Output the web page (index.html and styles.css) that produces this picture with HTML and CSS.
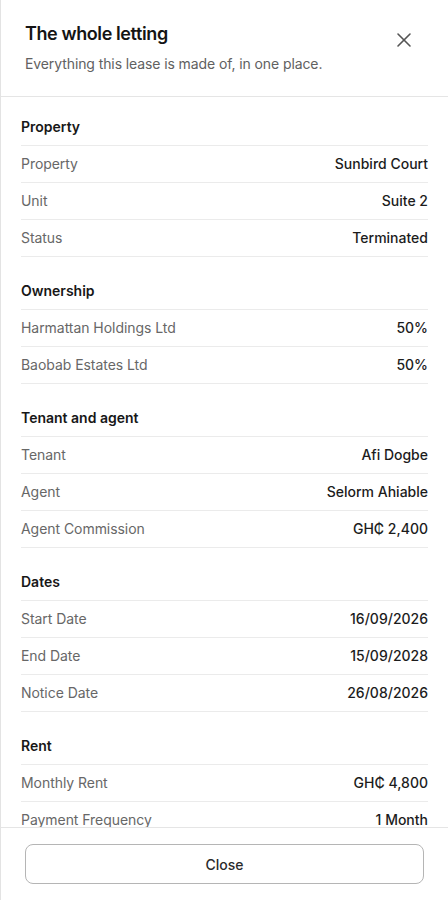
FILE: index.html
```html
<!DOCTYPE html>
<html lang="en">
<head>
<meta charset="utf-8">
<title>The whole letting</title>
<link rel="stylesheet" href="styles.css">
</head>
<body>
<div class="sheet">
  <header class="sheet-header">
    <div class="titles">
      <h1 class="title">The whole letting</h1>
      <p class="subtitle">Everything this lease is made of, in one place.</p>
    </div>
    <button class="close-x" aria-label="Close">
      <svg width="24" height="24" viewBox="0 0 24 24" fill="none" stroke="currentColor" stroke-width="1.6" stroke-linecap="round"><path d="M18 6 6 18"/><path d="m6 6 12 12"/></svg>
    </button>
  </header>
  <main class="sheet-body">
    <section class="group">
      <h2 class="group-title">Property</h2>
      <div class="row"><span class="label">Property</span><span class="value">Sunbird Court</span></div>
      <div class="row"><span class="label">Unit</span><span class="value">Suite 2</span></div>
      <div class="row"><span class="label">Status</span><span class="value">Terminated</span></div>
    </section>
    <section class="group">
      <h2 class="group-title">Ownership</h2>
      <div class="row"><span class="label">Harmattan Holdings Ltd</span><span class="value">50%</span></div>
      <div class="row"><span class="label">Baobab Estates Ltd</span><span class="value">50%</span></div>
    </section>
    <section class="group">
      <h2 class="group-title">Tenant and agent</h2>
      <div class="row"><span class="label">Tenant</span><span class="value">Afi Dogbe</span></div>
      <div class="row"><span class="label">Agent</span><span class="value">Selorm Ahiable</span></div>
      <div class="row"><span class="label">Agent Commission</span><span class="value">GH₵ 2,400</span></div>
    </section>
    <section class="group">
      <h2 class="group-title">Dates</h2>
      <div class="row"><span class="label">Start Date</span><span class="value">16/09/2026</span></div>
      <div class="row"><span class="label">End Date</span><span class="value">15/09/2028</span></div>
      <div class="row"><span class="label">Notice Date</span><span class="value">26/08/2026</span></div>
    </section>
    <section class="group">
      <h2 class="group-title">Rent</h2>
      <div class="row"><span class="label">Monthly Rent</span><span class="value">GH₵ 4,800</span></div>
      <div class="row"><span class="label">Payment Frequency</span><span class="value">1 Month</span></div>
    </section>
  </main>
  <footer class="sheet-footer">
    <button class="btn-close">Close</button>
  </footer>
</div>
</body>
</html>
```
FILE: styles.css
```css
* { box-sizing: border-box; }
html, body { margin: 0; padding: 0; background: #ffffff; }
body {
  font-family: Inter, "Noto Sans", "Liberation Sans", sans-serif;
  color: #171717;
}
.sheet {
  height: 100vh;
  display: flex;
  flex-direction: column;
  border-left: 1px solid #e3e3e3;
  background: #fff;
}
.sheet-header {
  display: flex;
  justify-content: space-between;
  align-items: flex-start;
  padding: 20px 32px 22px 24px;
  border-bottom: 1px solid #e5e5e5;
}
.title {
  margin: 0;
  font-size: 18px;
  line-height: 28px;
  font-weight: 600;
  color: #141414;
  letter-spacing: -0.4px;
}
.subtitle {
  margin: 6px 0 0;
  font-size: 14px;
  line-height: 20px;
  color: #616161;
  letter-spacing: -0.1px;
}
.close-x {
  margin-top: 8px;
  width: 24px;
  height: 24px;
  padding: 0;
  border: 0;
  background: none;
  color: #555;
  display: flex;
}
.sheet-body {
  flex: 1;
  overflow: hidden;
  padding: 20px 20px 0;
}
.group + .group { margin-top: 24px; }
.group-title {
  margin: 0;
  padding-bottom: 8px;
  font-size: 14px;
  line-height: 20px;
  font-weight: 600;
  color: #171717;
}
.row {
  display: flex;
  justify-content: space-between;
  align-items: center;
  padding: 8px 0;
  border-top: 1px solid #ebebeb;
  font-size: 14px;
  line-height: 20px;
}
.row:last-child { border-bottom: 1px solid #ebebeb; }
.label { color: #676767; letter-spacing: -0.05px; }
.value { color: #1c1c1c; font-weight: 500; }
.sheet-footer {
  border-top: 1px solid #e5e5e5;
  padding: 16px 24px;
}
.btn-close {
  width: 100%;
  height: 40px;
  border: 1px solid #b5b5b5;
  border-radius: 8px;
  background: #fff;
  font-family: inherit;
  font-size: 14px;
  font-weight: 500;
  color: #2b2b2b;
}
```
